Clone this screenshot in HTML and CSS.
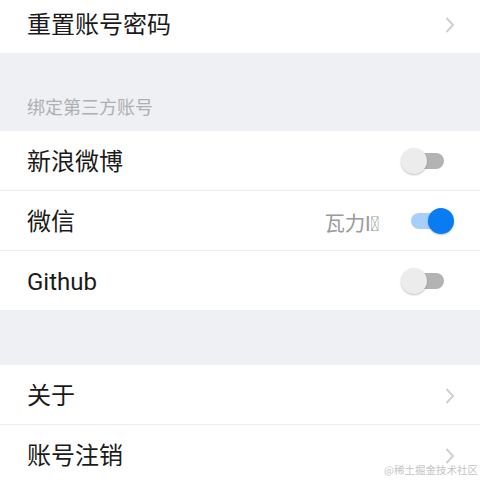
FILE: index.html
```html
<!DOCTYPE html>
<html lang="zh-CN">
<head>
<meta charset="utf-8">
<link rel="stylesheet" href="styles.css">
</head>
<body>
<div class="page">
  <div class="group">
    <div class="row first">
      <span class="label">重置账号密码</span>
      <svg class="chev" width="12" height="18" viewBox="0 0 12 18"><path d="M2.5 2 L9 9 L2.5 16" fill="none" stroke="#d0d0d0" stroke-width="2"/></svg>
    </div>
  </div>
  <div class="section-title">绑定第三方账号</div>
  <div class="group">
    <div class="row">
      <span class="label">新浪微博</span>
      <span class="switch"><span class="track"></span><span class="knob"></span></span>
    </div>
    <div class="row">
      <span class="label">微信</span>
      <span class="right">
        <span class="value">瓦力I&#xE600;</span>
        <span class="switch on"><span class="track"></span><span class="knob"></span></span>
      </span>
    </div>
    <div class="row">
      <span class="label latin">Github</span>
      <span class="switch"><span class="track"></span><span class="knob"></span></span>
    </div>
  </div>
  <div class="spacer"></div>
  <div class="group">
    <div class="row">
      <span class="label">关于</span>
      <svg class="chev" width="12" height="18" viewBox="0 0 12 18"><path d="M2.5 2 L9 9 L2.5 16" fill="none" stroke="#d0d0d0" stroke-width="2"/></svg>
    </div>
    <div class="row">
      <span class="label">账号注销</span>
      <svg class="chev" width="12" height="18" viewBox="0 0 12 18"><path d="M2.5 2 L9 9 L2.5 16" fill="none" stroke="#d0d0d0" stroke-width="2"/></svg>
    </div>
  </div>
</div>
<div class="watermark">@稀土掘金技术社区</div>
</body>
</html>
```
FILE: styles.css
```css
html, body {
  margin: 0;
  padding: 0;
  background: #eef0f3;
  overflow: hidden;
  height: 480px;
}
body {
  font-family: Roboto, "Noto Sans CJK SC", sans-serif;
  color: #1a1a1a;
}
.page {
  margin-top: -6px;
}
.group {
  background: #fff;
}
.row {
  height: 59px;
  display: flex;
  align-items: center;
  justify-content: space-between;
  padding: 0 25px 0 27px;
  border-top: 1px solid #ececec;
}
.group .row:first-child {
  border-top: none;
}
.label {
  font-size: 24px;
  line-height: 1;
  padding-top: 3px;
}
.chev {
  display: block;
  margin-top: 2px;
  margin-right: -1px;
}
.section-title {
  height: 78px;
  box-sizing: border-box;
  padding: 44px 27px 0;
  font-size: 18px;
  line-height: 22px;
  color: #adafb3;
}
.spacer {
  height: 55px;
}
.right {
  display: flex;
  align-items: center;
  gap: 22px;
}
.value {
  font-size: 20.5px;
  color: #9a9a9a;
  letter-spacing: -0.3px;
  padding-top: 2px;
}
.switch {
  position: relative;
  display: block;
  width: 53px;
  height: 26px;
  margin-right: 1px;
}
.track {
  position: absolute;
  left: 10px;
  top: 5px;
  width: 33px;
  height: 16px;
  border-radius: 8px;
  background: #b3b3b3;
}
.knob {
  position: absolute;
  left: 0;
  top: 0;
  width: 26px;
  height: 26px;
  border-radius: 50%;
  background: #ececec;
  box-shadow: 0 1px 2px rgba(0,0,0,0.25);
}
.switch.on .track {
  background: #a8cffa;
}
.switch.on .knob {
  left: 27px;
  background: #0a7cf2;
}
.watermark {
  position: absolute;
  right: 2px;
  bottom: 5px;
  font-size: 10.5px;
  line-height: 1;
  color: #c4c4c4;
  font-family: "Noto Sans CJK SC", sans-serif;
  text-shadow: 0 0 1px #fff;
}
```
